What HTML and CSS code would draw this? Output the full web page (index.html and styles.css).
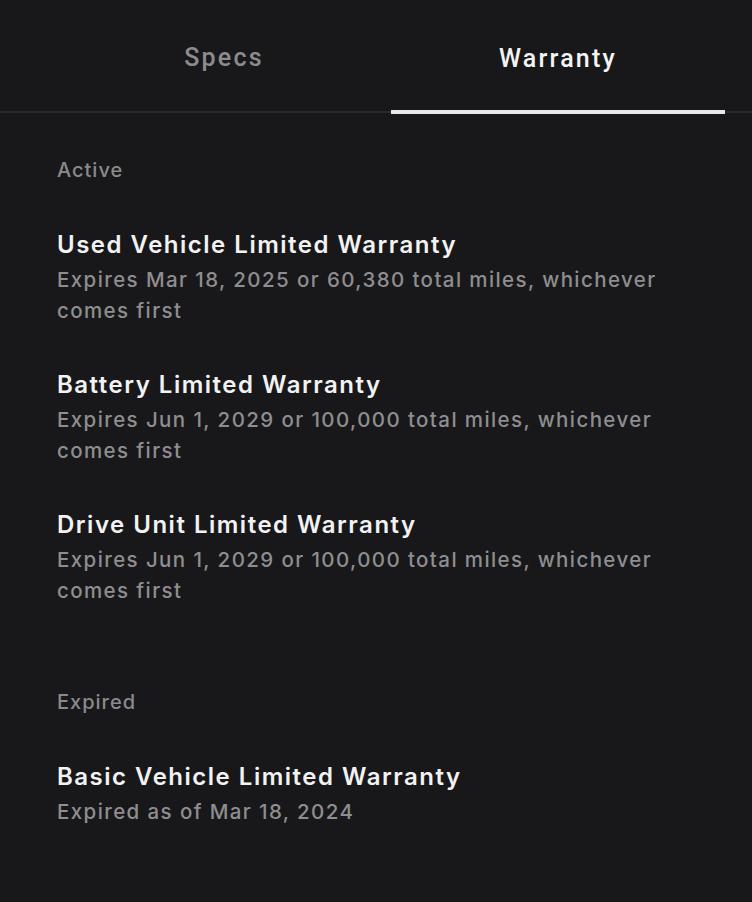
FILE: index.html
```html
<!DOCTYPE html>
<html>
<head>
<meta charset="utf-8">
<link rel="stylesheet" href="styles.css">
</head>
<body>
<div class="screen">
  <div class="tabs">
    <div class="tab">Specs</div>
    <div class="tab active">Warranty</div>
  </div>
  <div class="content">
    <div class="section-label">Active</div>
    <div class="item">
      <div class="item-title">Used Vehicle Limited Warranty</div>
      <div class="item-sub">Expires Mar 18, 2025 or 60,380 total miles, whichever comes first</div>
    </div>
    <div class="item">
      <div class="item-title">Battery Limited Warranty</div>
      <div class="item-sub">Expires Jun 1, 2029 or 100,000 total miles, whichever comes first</div>
    </div>
    <div class="item">
      <div class="item-title">Drive Unit Limited Warranty</div>
      <div class="item-sub">Expires Jun 1, 2029 or 100,000 total miles, whichever comes first</div>
    </div>
    <div class="section-label expired">Expired</div>
    <div class="item">
      <div class="item-title">Basic Vehicle Limited Warranty</div>
      <div class="item-sub">Expired as of Mar 18, 2024</div>
    </div>
  </div>
</div>
</body>
</html>
```
FILE: styles.css
```css
html, body {
  margin: 0;
  padding: 0;
  background: #18181a;
}
.screen {
  width: 752px;
  height: 902px;
  background: #18181a;
  font-family: "Inter", "Liberation Sans", sans-serif;
  overflow: hidden;
}
.tabs {
  display: flex;
  padding: 0 27px 0 57px;
  border-bottom: 2px solid #2a2a2c;
  height: 111px;
}
.tab {
  flex: 1;
  display: flex;
  align-items: center;
  justify-content: center;
  font-family: "Roboto", sans-serif;
  font-weight: 500;
  font-size: 25px;
  letter-spacing: 2.2px;
  color: #8c8c8e;
  padding-top: 3px;
  box-sizing: border-box;
}
.tab.active {
  color: #f4f4f4;
  border-bottom: 4px solid #e8e8e8;
  margin-bottom: -3px;
  padding-top: 6px;
}
.content {
  padding: 45px 40px 0 57px;
}
.section-label {
  font-size: 20px;
  font-weight: 500;
  letter-spacing: 1px;
  color: #8a8a8c;
  line-height: 24px;
  margin-bottom: 47px;
}
.section-label.expired {
  margin-top: 84px;
}
.item {
  margin-bottom: 43px;
}
.item-title {
  font-size: 24px;
  font-weight: 600;
  letter-spacing: 1.5px;
  color: #f2f2f2;
  line-height: 32px;
  margin-bottom: 3px;
}
.item-sub {
  font-size: 20.5px;
  font-weight: 500;
  letter-spacing: 1.4px;
  color: #8e8e90;
  line-height: 31px;
  max-width: 640px;
}
```
